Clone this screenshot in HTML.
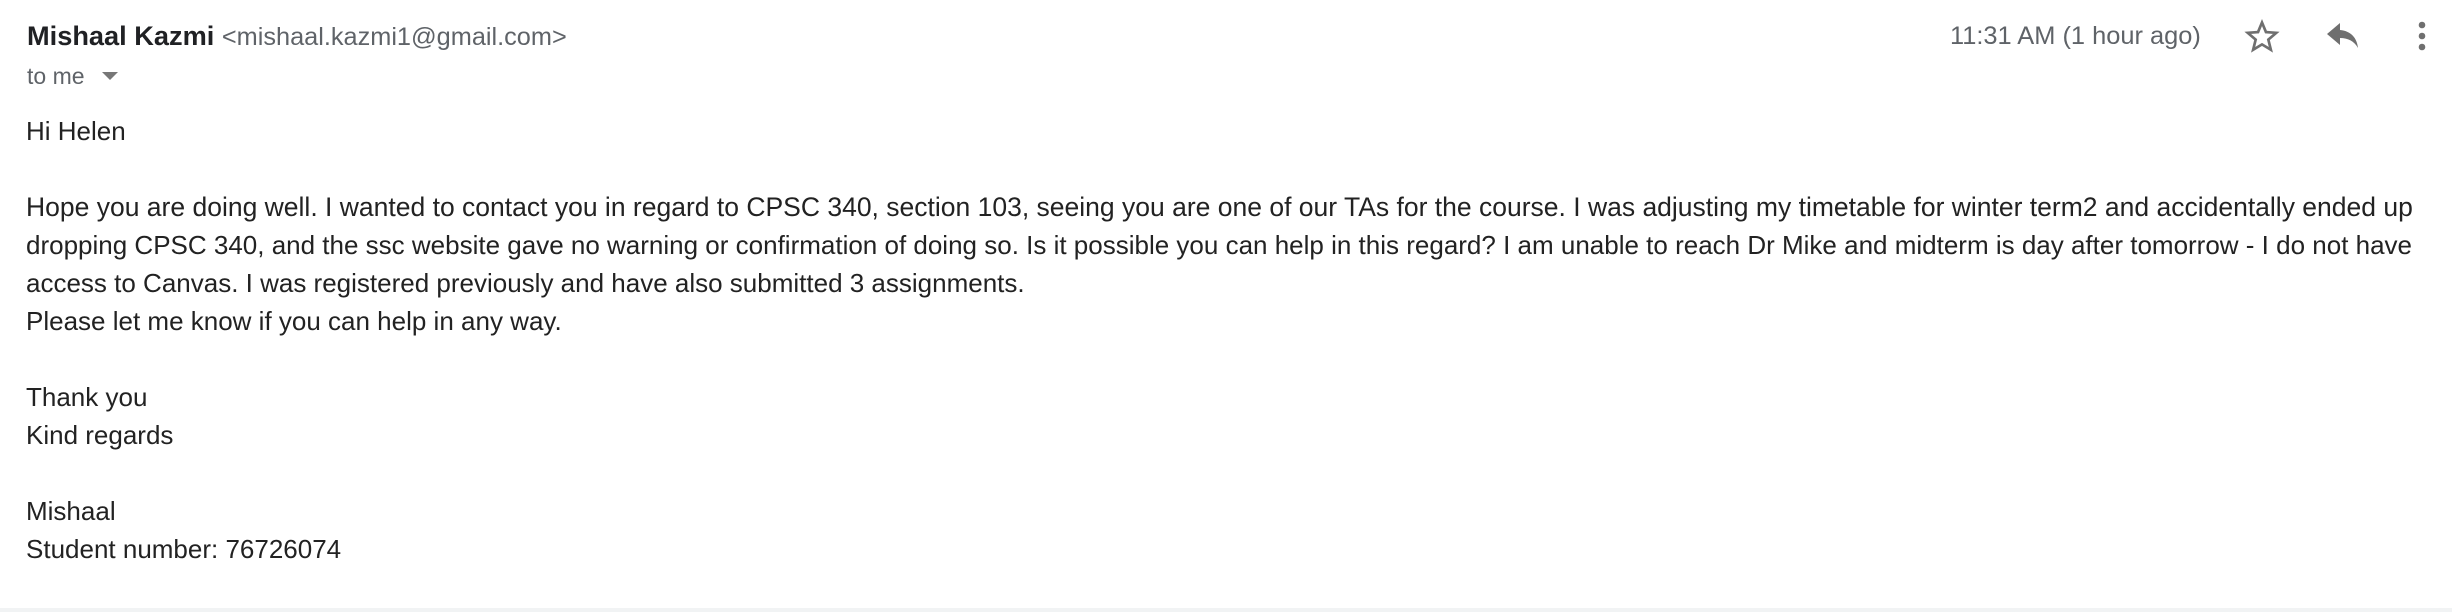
<!DOCTYPE html>
<html><head><meta charset="utf-8"><style>
html,body{margin:0;padding:0;background:#fff;}
body{width:2452px;height:612px;position:relative;overflow:hidden;font-family:"Liberation Sans",Arial,sans-serif;}
.a{position:absolute;white-space:nowrap;}
.name{left:27px;top:21px;font-size:27.2px;font-weight:bold;color:#202124;line-height:30px;}
.email{font-weight:normal;font-size:25.3px;color:#5f6368;}
.tome{left:27px;top:62px;font-size:23px;color:#5f6368;line-height:28px;}
.time{left:1950px;top:21px;font-size:25.4px;color:#5f6368;line-height:30px;}
.body{left:26px;top:112px;font-size:26px;line-height:38px;color:#222;}
.l1{font-size:26.5px;}
.bar{left:0;top:608px;width:2452px;height:4px;background:#f1f3f4;}
</style></head><body>
<div class="a name">Mishaal Kazmi <span class="email">&lt;mishaal.kazmi1@gmail.com&gt;</span></div>
<div class="a tome">to me</div>
<svg class="a" style="left:102px;top:71px" width="16" height="10"><path d="M0 1H16L8 9Z" fill="#777"/></svg>
<div class="a time">11:31 AM (1 hour ago)</div>
<svg class="a" style="left:2243px;top:17px" width="38" height="38" viewBox="0 0 24 24"><path d="M12 3.5l2.5 6 6.5.5-5 4.3 1.6 6.4L12 17.3l-5.6 3.4L8 14.3 3 10l6.5-.5z" fill="none" stroke="#6f6f6f" stroke-width="1.7" stroke-linejoin="miter"/></svg>
<svg class="a" style="left:2324px;top:20px" width="36" height="32" viewBox="0 0 36 32"><path d="M16 3L3 14l13 11v-7c8 0 14 3 18 10-1-10-7-17-18-18z" fill="#6f6f6f"/></svg>
<svg class="a" style="left:2416px;top:18px" width="12" height="36"><circle cx="6" cy="7" r="3.3" fill="#6f6f6f"/><circle cx="6" cy="18" r="3.3" fill="#6f6f6f"/><circle cx="6" cy="29" r="3.3" fill="#6f6f6f"/></svg>
<div class="a body">Hi Helen<br><br><span class="l1">Hope you are doing well. I wanted to contact you in regard to CPSC 340, section 103, seeing you are one of our TAs for the course. I was adjusting my timetable for winter term2 and accidentally ended up</span><br>dropping CPSC 340, and the ssc website gave no warning or confirmation of doing so. Is it possible you can help in this regard? I am unable to reach Dr Mike and midterm is day after tomorrow - I do not have<br>access to Canvas. I was registered previously and have also submitted 3 assignments.<br>Please let me know if you can help in any way.<br><br>Thank you<br>Kind regards<br><br>Mishaal<br>Student number: 76726074</div>
<div class="a bar"></div>
</body></html>
